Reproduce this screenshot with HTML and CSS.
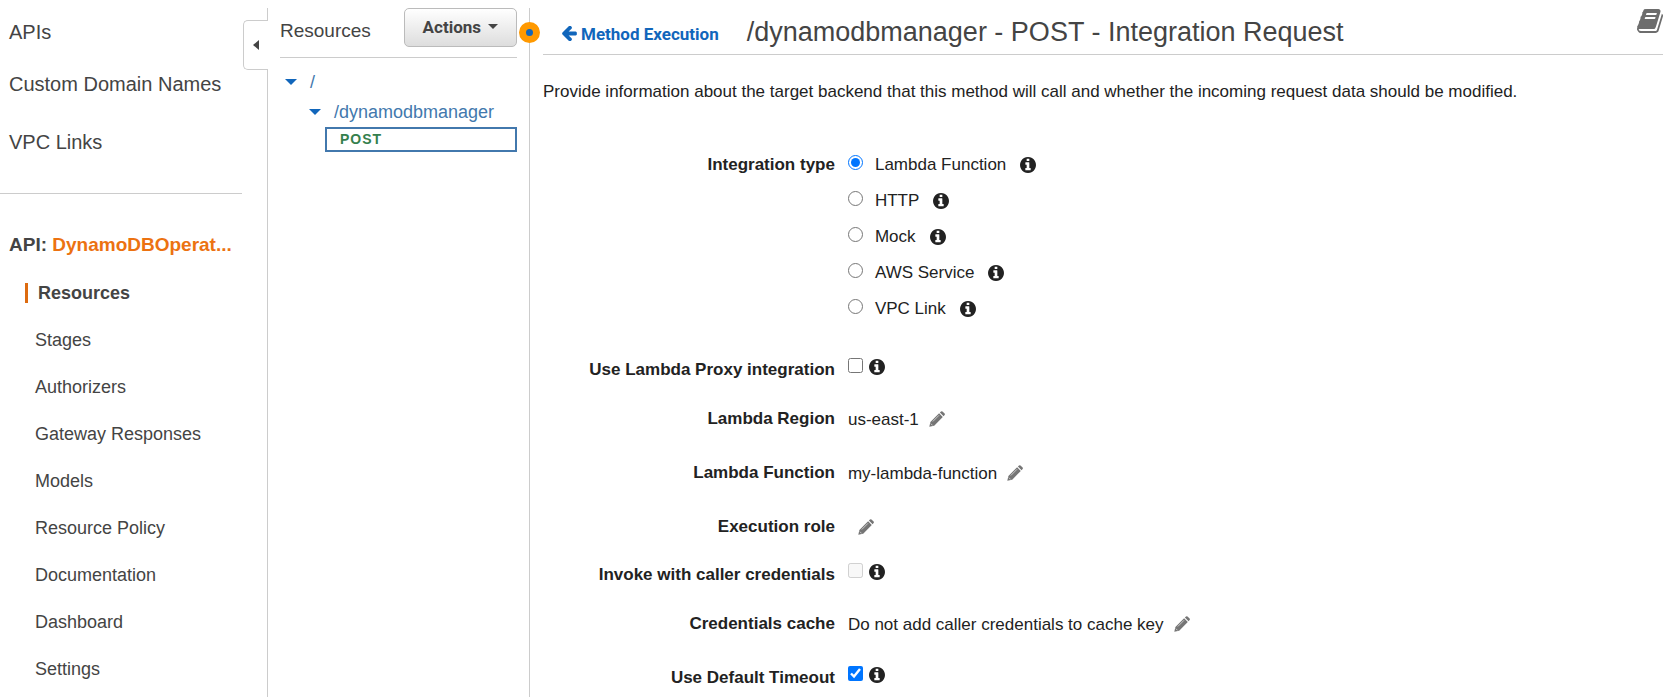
FILE: index.html
```html
<!DOCTYPE html>
<html lang="en">
<head>
<meta charset="utf-8">
<title>Integration Request</title>
<link rel="stylesheet" href="styles.css">
</head>
<body>
<svg class="sprite" aria-hidden="true">
  <symbol id="info" viewBox="128 128 1536 1536"><path d="M1152 1376v-160q0-14-9-23t-23-9h-96v-512q0-14-9-23t-23-9h-320q-14 0-23 9t-9 23v160q0 14 9 23t23 9h96v320h-96q-14 0-23 9t-9 23v160q0 14 9 23t23 9h448q14 0 23-9t9-23zm-128-896v-160q0-14-9-23t-23-9h-192q-14 0-23 9t-9 23v160q0 14 9 23t23 9h192q14 0 23-9t9-23zm640 416q0 209-103 385.5t-279.5 279.5-385.5 103-385.5-103-279.5-279.5-103-385.5 103-385.5 279.5-279.5 385.5-103 385.5 103 279.5 279.5 103 385.5z"/></symbol>
  <symbol id="pencil" viewBox="0 0 16 16"><path d="M10.900 1.500 12 .5q.8-.6 1.500 0l2.100 2.100q.6.700 0 1.500l-1 1.100zM10.100 2.300l3.700 3.700-8.600 8.700-4.900 1.100 1.100-4.900z"/><path class="glint" d="M10 4.300 3.800 10.500M1.800 12.600l1.800 1.800"/></symbol>
</svg>
<div class="console">
  <nav class="sidebar" aria-label="API Gateway">
    <ul class="top-links">
      <li><a href="#apis">APIs</a></li>
      <li><a href="#domains">Custom Domain Names</a></li>
      <li><a href="#vpc">VPC Links</a></li>
    </ul>
    <p class="api-name">API: <a href="#api">DynamoDBOperat...</a></p>
    <ul class="api-links">
      <li><a class="current" href="#resources" aria-current="page">Resources</a></li>
      <li><a href="#stages">Stages</a></li>
      <li><a href="#authorizers">Authorizers</a></li>
      <li><a href="#responses">Gateway Responses</a></li>
      <li><a href="#models">Models</a></li>
      <li><a href="#policy">Resource Policy</a></li>
      <li><a href="#documentation">Documentation</a></li>
      <li><a href="#dashboard">Dashboard</a></li>
      <li><a href="#settings">Settings</a></li>
    </ul>
    <button class="collapse" type="button" aria-label="Collapse sidebar"></button>
  </nav>
  <section class="resources">
    <header class="resources-head">
      <h2>Resources</h2>
      <button class="actions" type="button">Actions<span class="caret"></span></button>
    </header>
    <ul class="tree">
      <li class="node"><span class="caret"></span><a href="#root">/</a></li>
      <li class="node child"><span class="caret"></span><a href="#manager">/dynamodbmanager</a></li>
      <li class="method"><a href="#post">POST</a></li>
    </ul>
    <span class="handle"></span>
  </section>
  <main class="main">
    <header class="main-head">
      <a class="back" href="#method"><svg class="arrow" viewBox="190 210 1480 1500"><path d="M1664 896v128q0 53-32.500 90.500t-84.500 37.500h-704l293 294q38 36 38 90t-38 90l-75 76q-37 37-90 37-52 0-91-37l-651-652q-37-37-37-90 0-52 37-91l651-650q38-38 91-38 52 0 90 38l75 74q38 38 38 91t-38 91l-293 293h704q52 0 84.500 37.500t32.500 90.500z"/></svg>Method Execution</a>
      <h1>/dynamodbmanager - POST - Integration Request</h1>
      <a class="docs" href="#docs" aria-label="Documentation"><svg viewBox="64 128 1664 1536"><path d="M1703 478q40 57 18 129l-275 906q-19 64-76.5 107.5t-122.5 43.5h-923q-77 0-148.5-53.5t-99.5-131.5q-24-67-2-127 0-4 3-27t4-37q1-8-3-21.500t-3-19.500q2-11 8-21t16.500-23.500 16.500-23.500q23-38 45-91.500t30-91.500q3-10 .5-30t-.5-28q3-11 17-28t17-23q21-36 42-92t25-90q1-9-2.500-32t.5-28q4-13 22-30.500t22-22.500q19-26 42.500-84.500t27.500-96.500q1-8-3-25.500t-2-26.500q2-8 9-18t18-23 17-21q8-12 16.500-30.500t15-35 16-36 19.500-32 26.500-23.500 36-11.500 47.500 5.500l-1 3q38-9 51-9h761q74 0 114 56t18 130l-274 906q-36 119-71.500 153.500t-128.500 34.500h-869q-27 0-38 15-11 16-1 43 24 70 144 70h923q29 0 56-15.500t35-41.500l300-987q7-22 5-57 38 15 59 43zm-1064 2q-4 13 2 22.500t20 9.500h608q13 0 25.500-9.500t16.500-22.500l21-64q4-13-2-22.500t-20-9.500h-608q-13 0-25.500 9.500t-16.500 22.500zm-83 256q-4 13 2 22.500t20 9.500h608q13 0 25.500-9.500t16.500-22.500l21-64q4-13-2-22.500t-20-9.500h-608q-13 0-25.500 9.500t-16.500 22.500z"/></svg></a>
    </header>
    <p class="intro">Provide information about the target backend that this method will call and whether the incoming request data should be modified.</p>
    <form class="form">
      <div class="row types" role="radiogroup" aria-labelledby="type-label">
        <span class="label" id="type-label">Integration type</span>
        <div class="options">
          <div class="option"><input type="radio" name="type" id="t1" checked><label for="t1">Lambda Function</label><svg class="info"><use href="#info"/></svg></div>
          <div class="option"><input type="radio" name="type" id="t2"><label for="t2">HTTP</label><svg class="info"><use href="#info"/></svg></div>
          <div class="option"><input type="radio" name="type" id="t3"><label for="t3">Mock</label><svg class="info"><use href="#info"/></svg></div>
          <div class="option"><input type="radio" name="type" id="t4"><label for="t4">AWS Service</label><svg class="info"><use href="#info"/></svg></div>
          <div class="option"><input type="radio" name="type" id="t5"><label for="t5">VPC Link</label><svg class="info"><use href="#info"/></svg></div>
        </div>
      </div>
      <div class="row check">
        <label class="label" for="proxy">Use Lambda Proxy integration</label>
        <div class="value"><input type="checkbox" id="proxy"><svg class="info"><use href="#info"/></svg></div>
      </div>
      <div class="row">
        <span class="label">Lambda Region</span>
        <div class="value">us-east-1<button class="edit" type="button" aria-label="Edit Lambda Region"><svg><use href="#pencil"/></svg></button></div>
      </div>
      <div class="row">
        <span class="label">Lambda Function</span>
        <div class="value">my-lambda-function<button class="edit" type="button" aria-label="Edit Lambda Function"><svg><use href="#pencil"/></svg></button></div>
      </div>
      <div class="row compact">
        <span class="label">Execution role</span>
        <div class="value"><button class="edit" type="button" aria-label="Edit Execution role"><svg><use href="#pencil"/></svg></button></div>
      </div>
      <div class="row check">
        <label class="label" for="invoke">Invoke with caller credentials</label>
        <div class="value"><input type="checkbox" id="invoke" disabled><svg class="info"><use href="#info"/></svg></div>
      </div>
      <div class="row">
        <span class="label">Credentials cache</span>
        <div class="value">Do not add caller credentials to cache key<button class="edit" type="button" aria-label="Edit Credentials cache"><svg><use href="#pencil"/></svg></button></div>
      </div>
      <div class="row check">
        <label class="label" for="timeout">Use Default Timeout</label>
        <div class="value"><input type="checkbox" id="timeout" checked><svg class="info"><use href="#info"/></svg></div>
      </div>
    </form>
  </main>
</div>
</body>
</html>
```
FILE: styles.css
```css
* { box-sizing: border-box; }
body {
  margin: 0;
  background: #fff;
  color: #222;
  font: 17px/24px "Liberation Sans", Arial, sans-serif;
}
h1, h2, p, ul { margin: 0; padding: 0; font-weight: normal; }
ul { list-style: none; }
a { color: inherit; text-decoration: none; }
button { font: inherit; cursor: pointer; }
.sprite { display: none; }

.console {
  display: grid;
  grid-template-columns: 268px 262px minmax(0, 1fr);
  height: 100vh;
  padding-top: 8px;
  overflow: hidden;
}

/* Left navigation */
.sidebar {
  position: relative;
  border-right: 1px solid #ccc;
  color: #444;
}
.top-links {
  display: flex;
  flex-direction: column;
  gap: 28px;
  margin-right: 25px;
  padding: 12px 0 39px 9px;
  border-bottom: 1px solid #ccc;
  font-size: 20px;
}
.top-links li:last-child { margin-top: 6px; }
.api-name {
  padding: 39px 0 0 9px;
  font-size: 19px;
  font-weight: bold;
}
.api-name a { color: #ec7211; }
.api-links {
  display: flex;
  flex-direction: column;
  gap: 23px;
  padding: 24px 0 0 25px;
  font-size: 18px;
}
.api-links a { display: block; padding-left: 10px; }
.api-links .current {
  border-left: 3px solid #dd6b10;
  font-weight: bold;
  line-height: 20px;
  margin: 2px 0;
}
.collapse {
  position: absolute;
  top: 12px;
  right: -1px;
  width: 25px;
  height: 50px;
  padding: 0;
  border: 1px solid #ccc;
  border-right: 0;
  border-radius: 5px 0 0 5px;
  background: #fff;
}
.collapse::before {
  content: "";
  display: block;
  width: 0;
  margin-left: 9px;
  border: 5px solid transparent;
  border-right: 6px solid #444;
  border-left: 0;
}

/* Resource tree */
.resources {
  position: relative;
  padding: 0 12px;
  border-right: 1px solid #ccc;
}
.resources-head {
  display: flex;
  justify-content: space-between;
  padding-bottom: 3px;
  border-bottom: 1px solid #ccc;
}
.resources-head h2 {
  color: #444;
  font-size: 19px;
  line-height: 46px;
}
.actions {
  display: flex;
  align-items: center;
  gap: 7px;
  height: 39px;
  padding: 0 18px 2px;
  border: 1px solid #bbb;
  border-radius: 5px;
  background: linear-gradient(#fff, #ddd);
  color: #444;
  font: bold 17px/24px Roboto, sans-serif;
}
.caret {
  border: 5px solid transparent;
  border-top-color: currentColor;
  border-bottom: 0;
}
.tree { padding-top: 9px; color: #4278ad; font-size: 18px; }
.node {
  display: flex;
  align-items: center;
  gap: 13px;
  height: 30px;
  padding-left: 5px;
}
.node .caret { border-width: 6px 6px 0; color: #1166bb; }
.child { padding-left: 29px; }
.method a {
  display: block;
  margin-left: 45px;
  padding: 0 13px;
  border: 2px solid #4278ad;
  color: #35804d;
  font-size: 14px;
  font-weight: bold;
  letter-spacing: 1px;
  line-height: 21px;
}
.handle {
  position: absolute;
  top: 14px;
  right: -11px;
  width: 21px;
  height: 21px;
  border: 7px solid #ff9900;
  border-radius: 50%;
  background: #1166bb;
}

/* Integration request */
.main { padding-left: 13px; }
.main-head {
  display: flex;
  align-items: baseline;
  height: 47px;
  padding: 8px 0 0 19px;
  border-bottom: 1px solid #ccc;
}
.back {
  display: flex;
  align-items: center;
  gap: 4px;
  color: #1166bb;
  font: bold 17px/24px Roboto, sans-serif;
}
.arrow { width: 15px; height: 15px; fill: currentColor; }
h1 {
  margin-left: 28px;
  color: #444;
  font-size: 27px;
  line-height: 32px;
}
.docs { align-self: flex-start; margin: -7px 0 0 auto; fill: #6d6d6d; }
.docs svg { display: block; width: 26px; height: 24px; }
.intro { padding-top: 25px; }
.form { padding-top: 49px; }
.row {
  display: grid;
  grid-template-columns: 26% minmax(0, 1fr);
  gap: 13px;
  align-items: start;
  height: 54px;
  padding-left: 1px;
}
.label { font-weight: bold; text-align: right; }
.types { height: auto; padding-bottom: 25px; }
.option, .value { display: flex; align-items: flex-start; }
.option { height: 36px; }
.option label { margin: 0 14px 0 12px; }
.value { padding-top: 1px; }
.compact { height: 48px; }
.check { height: 49px; }
.check .value { padding-top: 0; }
input { flex: none; width: 15px; height: 15px; margin: 2px 0 0; }
.check input { margin: 0; }
.info { flex: none; width: 16px; height: 16px; margin-top: 4px; fill: #222; }
.check .info { margin: 1px 0 0 6px; }
.edit {
  margin: 3px 0 0 10px;
  padding: 0;
  border: 0;
  background: none;
  color: #757575;
}
.edit svg { display: block; width: 16px; height: 16px; fill: currentColor; }
.glint { fill: none; stroke: #fff; stroke-width: 1px; stroke-opacity: 0.6; }
```
